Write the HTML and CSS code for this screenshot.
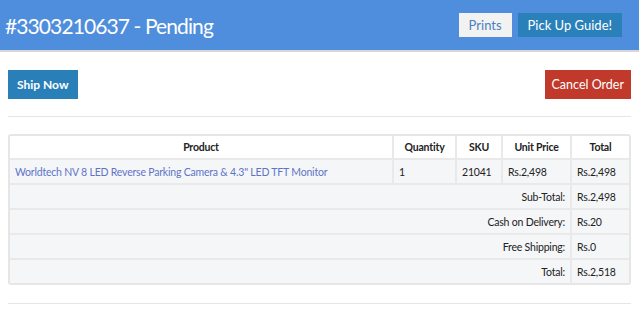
FILE: index.html
```html
<!DOCTYPE html>
<html lang="en">
<head>
    <meta charset="UTF-8">
    <meta name="viewport" content="width=device-width, initial-scale=1.0">
    <link rel="stylesheet" href="styles.css">
    <title>Order #3303210637</title>
</head>
<body>
    <div class="order-header">
        <h1 class="order-title">#3303210637 - Pending</h1>
        <div class="header-actions">
            <a href="#" class="btn-prints">Prints</a>
            <a href="#" class="btn-guide">Pick Up Guide!</a>
        </div>
    </div>

    <div class="order-body">
        <div class="action-row">
            <a href="#" class="btn-ship">Ship Now</a>
            <a href="#" class="btn-cancel">Cancel Order</a>
        </div>
        <hr class="divider">

        <div class="table-wrap">
            <table class="order-table">
                <colgroup>
                    <col class="col-product">
                    <col class="col-qty">
                    <col class="col-sku">
                    <col class="col-price">
                    <col class="col-total">
                </colgroup>
                <thead>
                    <tr>
                        <th>Product</th>
                        <th>Quantity</th>
                        <th>SKU</th>
                        <th>Unit Price</th>
                        <th>Total</th>
                    </tr>
                </thead>
                <tbody>
                    <tr>
                        <td><a href="#" class="product-link">Worldtech NV 8 LED Reverse Parking Camera &amp; 4.3" LED TFT Monitor</a></td>
                        <td>1</td>
                        <td>21041</td>
                        <td>Rs.2,498</td>
                        <td>Rs.2,498</td>
                    </tr>
                    <tr class="sum-row">
                        <td colspan="4" class="sum-label">Sub-Total:</td>
                        <td>Rs.2,498</td>
                    </tr>
                    <tr class="sum-row">
                        <td colspan="4" class="sum-label">Cash on Delivery:</td>
                        <td>Rs.20</td>
                    </tr>
                    <tr class="sum-row">
                        <td colspan="4" class="sum-label">Free Shipping:</td>
                        <td>Rs.0</td>
                    </tr>
                    <tr class="sum-row">
                        <td colspan="4" class="sum-label">Total:</td>
                        <td>Rs.2,518</td>
                    </tr>
                </tbody>
            </table>
        </div>
        <hr class="divider bottom">
    </div>
</body>
</html>
```

FILE: styles.css
```css
body {
    font-family: Lato, "Open Sans", sans-serif;
    margin: 0;
    padding: 0;
    background-color: #fff;
    color: #222;
}

a {
    text-decoration: none;
}

.order-header {
    display: flex;
    align-items: center;
    justify-content: space-between;
    height: 50px;
    background-color: #4f8edc;
    border-bottom: 2px solid #d6d6d6;
    padding: 0 17px 0 5px;
}

.order-title {
    margin: 0;
    font-size: 21px;
    letter-spacing: -0.9px;
    font-weight: normal;
    color: #fff;
}

.header-actions {
    display: flex;
    gap: 6px;
}

.btn-prints,
.btn-guide {
    display: block;
    height: 24px;
    line-height: 24px;
    font-size: 13px;
    padding: 0 10px;
}

.btn-prints {
    background-color: #f2f2f2;
    color: #4a7fc0;
}

.btn-guide {
    background-color: #2a80b9;
    color: #fff;
}

.order-body {
    padding: 18px 8px 0 8px;
}

.action-row {
    display: flex;
    justify-content: space-between;
}

.btn-ship,
.btn-cancel {
    display: block;
    height: 29px;
    line-height: 29px;
    padding: 0 9px;
    font-size: 12px;
    font-weight: bold;
    color: #fff;
}

.btn-ship {
    background-color: #2980b9;
}

.btn-cancel {
    background-color: #c0392b;
    font-weight: normal;
    font-size: 12.5px;
    padding: 0 7px;
}

.divider {
    border: none;
    border-top: 1px solid #e6e6e6;
    margin: 17px 0 17px 0;
}

.divider.bottom {
    margin: 18px 0 0 0;
}

.table-wrap {
    border: 2px solid #e6e6e6;
    border-radius: 3px;
    overflow: hidden;
}

.order-table {
    width: 100%;
    border-collapse: collapse;
    table-layout: fixed;
    font-size: 10.5px;
    letter-spacing: -0.2px;
}

.col-product { width: 383px; }
.col-qty { width: 63px; }
.col-sku { width: 46px; }
.col-price { width: 69px; }

.order-table th,
.order-table td {
    border: 2px solid #e9e9e9;
    height: 23px;
    padding: 0 5px;
    text-align: left;
    color: #222;
}

.order-table th {
    background-color: #fff;
    text-align: center;
    font-weight: bold;
    height: 22px;
}

.order-table tr:first-child th,
.order-table tr:first-child td {
    border-top: none;
}

.order-table th:first-child,
.order-table td:first-child {
    border-left: none;
}

.order-table th:last-child,
.order-table td:last-child {
    border-right: none;
}

.order-table tbody tr:last-child td {
    border-bottom: none;
}

.order-table tbody td {
    background-color: #f5f6f8;
}

.sum-label {
    text-align: right !important;
}

.product-link {
    color: #5f74c8;
}
```
